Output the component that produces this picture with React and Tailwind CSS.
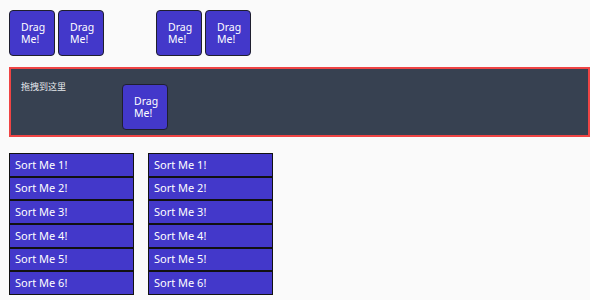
import React from 'react';

const font = { fontFamily: '"Noto Sans", "Noto Sans CJK SC", sans-serif' };

function DragBox({ hidden, className = '' }) {
  return (
    <div
      className={`w-[46px] h-[46px] shrink-0 rounded-[4px] border border-[#1f1f2e] bg-[#4338ca] text-white text-[10.5px] leading-[12px] flex items-center pl-[11px] pr-[8px] ${hidden ? 'invisible' : ''} ${className}`}
    >
      Drag Me!
    </div>
  );
}

function SortList() {
  const items = [1, 2, 3, 4, 5, 6];
  return (
    <div className="w-[125px] flex flex-col">
      {items.map((n) => (
        <div
          key={n}
          className="h-[23.7px] border border-[#111] bg-[#4338ca] text-white text-[11px] flex items-center pl-[5px]"
        >
          Sort Me {n}!
        </div>
      ))}
    </div>
  );
}

export default function App() {
  return (
    <div className="w-[590px] h-[300px] overflow-hidden bg-[#fafafa] pl-[9px] pt-[10px]" style={font}>
      <div className="flex gap-[3px]">
        <DragBox />
        <DragBox />
        <DragBox hidden />
        <DragBox />
        <DragBox />
      </div>

      {/* drop zone: red frame around the dark panel */}
      <div className="mt-[11px] w-[581px] h-[70px] bg-[#ef4444] p-[2px]">
        <div className="relative h-full bg-[#374151] pl-[10px] pt-[12px]">
          <div className="text-[9px] leading-[11px] text-[#e5e7eb]">拖拽到这里</div>
          <DragBox className="absolute left-[111px] top-[15px]" />
        </div>
      </div>

      <div className="mt-[16px] flex gap-[14px]">
        <SortList />
        <SortList />
      </div>
    </div>
  );
}
